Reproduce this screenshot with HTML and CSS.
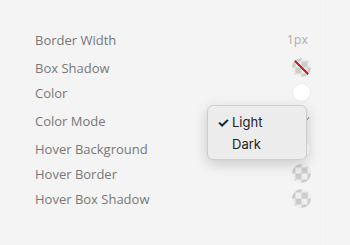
FILE: index.html
```html
<!DOCTYPE html>
<html>
<head>
<meta charset="utf-8">
<link rel="stylesheet" href="styles.css">
</head>
<body>
<div class="panel">
  <div class="row tall"><span class="label">Border Width</span><span class="value">1px</span></div>
  <div class="row"><span class="label">Box Shadow</span><span class="swatch checker none"></span></div>
  <div class="row"><span class="label">Color</span><span class="swatch white"></span></div>
  <div class="row tall mode">
    <span class="label">Color Mode</span>
    <svg class="chev" width="8" height="6" viewBox="0 0 8 6"><path d="M1 1.5 L4 4.5 L7 1.5" fill="none" stroke="#999" stroke-width="1.2"/></svg>
    <div class="menu">
      <div class="item"><span class="check">✓</span>Light</div>
      <div class="item"><span class="check"></span>Dark</div>
    </div>
  </div>
  <div class="row"><span class="label">Hover Background</span><span class="swatch white"></span></div>
  <div class="row"><span class="label">Hover Border</span><span class="swatch checker"></span></div>
  <div class="row"><span class="label">Hover Box Shadow</span><span class="swatch checker"></span></div>
</div>
</body>
</html>
```
FILE: styles.css
```css
html, body {
  margin: 0;
  padding: 0;
  background: #f4f4f4;
  width: 350px;
  height: 245px;
  overflow: hidden;
}
.panel {
  width: 326px;
  height: 245px;
  box-sizing: border-box;
  padding: 24px 0 0 35px;
  border-right: 1px solid #f0f0f0;
  font-family: "Open Sans", sans-serif;
}
.row {
  width: 277px;
  height: 25px;
  display: flex;
  align-items: center;
  justify-content: space-between;
  position: relative;
}
.row.tall { height: 31px; }
.row.mode { z-index: 2; }
.label {
  font-size: 13px;
  color: #787878;
}
.value {
  font-size: 12.5px;
  color: #b0b0b0;
  padding-right: 4px;
}
.swatch {
  width: 19px;
  height: 19px;
  border-radius: 50%;
  margin-right: 1px;
  box-sizing: border-box;
}
.white {
  background: #fff;
  border: 1px solid #ececec;
}
.checker {
  background-color: #e8e8e8;
  background-image:
    conic-gradient(#cccccc 25%, #eeeeee 0 50%, #cccccc 0 75%, #eeeeee 0);
  background-size: 12px 12px;
  background-position: 3.5px 3.5px;
}
.none {
  background-image:
    linear-gradient(to top right, transparent calc(50% - 1.4px), #e21d1d calc(50% - 1.4px), #e21d1d calc(50% + 1.4px), transparent calc(50% + 1.4px)),
    conic-gradient(#cccccc 25%, #eeeeee 0 50%, #cccccc 0 75%, #eeeeee 0);
  background-size: 100% 100%, 12px 12px;
  background-position: 0 0, 3.5px 3.5px;
}
.chev {
  margin-right: 2px;
  margin-top: -3px;
}
.menu {
  position: absolute;
  left: 172px;
  top: 0;
  width: 100px;
  height: 55px;
  box-sizing: border-box;
  padding: 5px 0;
  background: #ececec;
  border: 1px solid #cdcdcd;
  border-radius: 6px;
  box-shadow: 0 4px 14px rgba(0,0,0,0.18);
  font-family: "Inter", "Liberation Sans", sans-serif;
  font-size: 13px;
  color: #222;
}
.item {
  height: 22px;
  display: flex;
  align-items: center;
  padding-left: 9px;
}
.check {
  width: 15px;
  font-size: 14px;
  font-weight: 700;
  color: #222;
}
```
